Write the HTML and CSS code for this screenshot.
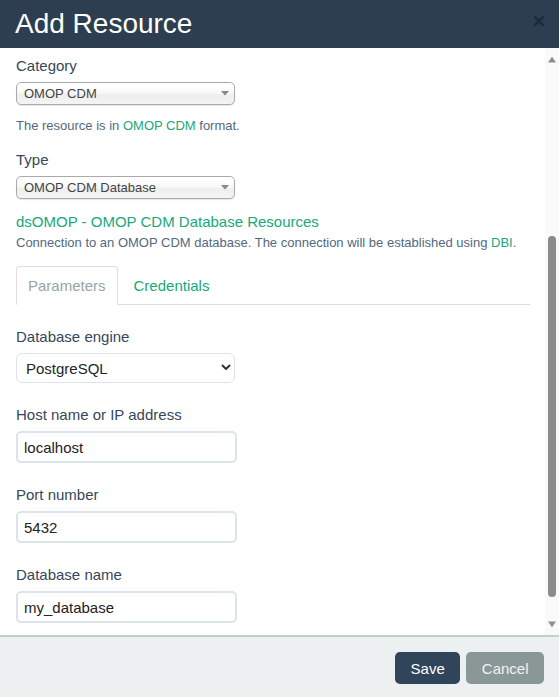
FILE: index.html
```html
<!DOCTYPE html>
<html lang="en">
<head>
<meta charset="utf-8">
<title>Add Resource</title>
<link rel="stylesheet" href="styles.css">
</head>
<body>
<div class="modal">
  <header class="modal-header">
    <h1 class="modal-title">Add Resource</h1>
    <button class="close" aria-label="Close">
      <svg width="10" height="10" viewBox="0 0 10 10"><path d="M1.3 1.3L8.7 8.7M8.7 1.3L1.3 8.7" stroke="#1d2b39" stroke-width="2.6" stroke-linecap="round"/></svg>
    </button>
  </header>
  <div class="modal-body">
    <div class="scroll-content">
      <label class="label first">Category</label>
      <div class="chosen">
        <span class="chosen-text">OMOP CDM</span>
        <svg class="chosen-arrow" width="8" height="5" viewBox="0 0 8 5"><polygon points="0,0 8,0 4,4.6" fill="#888"/></svg>
      </div>
      <p class="help">The resource is in <a class="link">OMOP CDM</a> format.</p>

      <label class="label type-label">Type</label>
      <div class="chosen">
        <span class="chosen-text">OMOP CDM Database</span>
        <svg class="chosen-arrow" width="8" height="5" viewBox="0 0 8 5"><polygon points="0,0 8,0 4,4.6" fill="#888"/></svg>
      </div>
      <p class="resource-title">dsOMOP - OMOP CDM Database Resources</p>
      <p class="resource-desc">Connection to an OMOP CDM database. The connection will be established using <a class="link">DBI</a>.</p>

      <ul class="tabs">
        <li class="tab active">Parameters</li>
        <li class="tab"><a class="link">Credentials</a></li>
      </ul>

      <div class="params">
        <div class="field">
          <label class="label">Database engine</label>
          <select class="form-select">
            <option>PostgreSQL</option>
          </select>
        </div>
        <div class="field">
          <label class="label">Host name or IP address</label>
          <input class="form-input" type="text" value="localhost">
        </div>
        <div class="field">
          <label class="label">Port number</label>
          <input class="form-input" type="text" value="5432">
        </div>
        <div class="field">
          <label class="label">Database name</label>
          <input class="form-input" type="text" value="my_database">
        </div>
      </div>
    </div>
    <div class="scrollbar">
      <svg class="sb-arrow" width="8" height="7" viewBox="0 0 8 7"><polygon points="0,6.5 4,0.8 8,6.5" fill="#8d8d8d"/></svg>
      <div class="sb-thumb"></div>
      <svg class="sb-arrow" width="8" height="7" viewBox="0 0 8 7"><polygon points="0,0.5 8,0.5 4,6.2" fill="#8d8d8d"/></svg>
    </div>
  </div>
  <footer class="modal-footer">
    <button class="btn btn-primary">Save</button>
    <button class="btn btn-default">Cancel</button>
  </footer>
</div>
</body>
</html>
```
FILE: styles.css
```css
* {
  box-sizing: border-box;
}

body {
  margin: 0;
  background: #fff;
  font-family: "Liberation Sans", Arial, sans-serif;
}

.modal {
  width: 559px;
  height: 697px;
  display: flex;
  flex-direction: column;
  background: #fff;
}

.modal-header {
  flex: none;
  height: 48px;
  background: #2c3e50;
  display: flex;
  align-items: center;
  justify-content: space-between;
  padding: 0 15px;
}

.modal-title {
  margin: 0;
  font-size: 28px;
  font-weight: normal;
  line-height: 32px;
  color: #fff;
}

.close {
  display: flex;
  width: 10px;
  height: 10px;
  padding: 0;
  margin-top: -6px;
  border: 0;
  background: none;
}

.modal-body {
  flex: none;
  height: 587px;
  display: flex;
  overflow: hidden;
}

.scroll-content {
  flex: 1;
  padding: 9px 15px 0 16px;
  color: #35475a;
}

.label {
  display: block;
  font-size: 15px;
  line-height: 18px;
  padding-bottom: 2px;
  color: #35475a;
}

.type-label {
  margin-top: 16px;
}

.chosen {
  margin-top: 5px;
  width: 219px;
  height: 23px;
  display: flex;
  align-items: center;
  padding: 0 5px 0 7px;
  border: 1px solid #aaa;
  border-radius: 5px;
  background: linear-gradient(#fff 20%, #f6f6f6 50%, #eee 52%, #f4f4f4 100%);
  box-shadow: 0 1px 1px rgba(0, 0, 0, 0.1);
  font-size: 13px;
  color: #444;
}

.chosen-text {
  flex: 1;
}

.chosen-arrow {
  display: block;
  flex: none;
}

.help {
  margin: 12px 0 0;
  font-size: 13px;
  line-height: 18px;
  color: #53687f;
}

.link {
  color: #18a87b;
  text-decoration: none;
}

.resource-title {
  margin: 13px 0 0;
  font-size: 15px;
  line-height: 20px;
  color: #18a87b;
}

.resource-desc {
  margin: 2px 0 0;
  font-size: 13px;
  line-height: 18px;
  color: #53687f;
}

.tabs {
  display: flex;
  list-style: none;
  margin: 14px 0 0;
  padding: 0;
  border-bottom: 1px solid #ddd;
}

.tab {
  height: 39px;
  display: flex;
  align-items: center;
  padding: 0 11px;
  margin-right: 4px;
  margin-bottom: -1px;
  border: 1px solid transparent;
  border-radius: 4px 4px 0 0;
  font-size: 15px;
}

.tab.active {
  border-color: #ddd #ddd transparent;
  background: #fff;
  color: #95a5a6;
}

.params {
  padding-top: 23px;
}

.field {
  margin-bottom: 23px;
}

.form-select {
  display: block;
  margin-top: 5px;
  width: 219px;
  height: 30px;
  padding: 0 20px 0 9px;
  border: 1px solid #dae2ea;
  border-radius: 6px;
  appearance: none;
  -webkit-appearance: none;
  background: #fff url("data:image/svg+xml,%3Csvg xmlns='http://www.w3.org/2000/svg' viewBox='0 0 10 6'%3E%3Cpath d='M1 1l4 4 4-4' fill='none' stroke='%23333' stroke-width='2'/%3E%3C/svg%3E") no-repeat right 3px top 10px / 10px 6px;
  font-family: "Liberation Sans", Arial, sans-serif;
  font-size: 15px;
  color: #212529;
}

.form-input {
  display: block;
  margin-top: 5px;
  width: 221px;
  height: 32px;
  padding: 0 6px;
  border: 2px solid #dbe4ec;
  border-radius: 5px;
  background: #fff;
  font-family: "Liberation Sans", Arial, sans-serif;
  font-size: 15px;
  color: #222;
}

.scrollbar {
  flex: none;
  width: 14px;
  display: flex;
  flex-direction: column;
  align-items: center;
  padding-top: 8px;
  background: #f9f9f9;
}

.sb-arrow {
  display: block;
  flex: none;
}

.sb-thumb {
  flex: none;
  width: 8px;
  height: 361px;
  margin: 173px 0 24px;
  border-radius: 4px;
  background: #8b8b8b;
}

.modal-footer {
  flex: none;
  height: 62px;
  display: flex;
  justify-content: flex-end;
  align-items: flex-start;
  gap: 6px;
  padding: 15px 15px 0 0;
  border-top: 2px solid #c8cccd;
  background: #ecf0f1;
}

.btn {
  height: 32px;
  padding: 0 15.5px;
  border: 0;
  border-radius: 5px;
  font-family: "Liberation Sans", Arial, sans-serif;
  font-size: 15px;
  color: #fff;
}

.btn-primary {
  background: #31455a;
}

.btn-default {
  background: #899797;
  color: #f2f2f2;
}
```
